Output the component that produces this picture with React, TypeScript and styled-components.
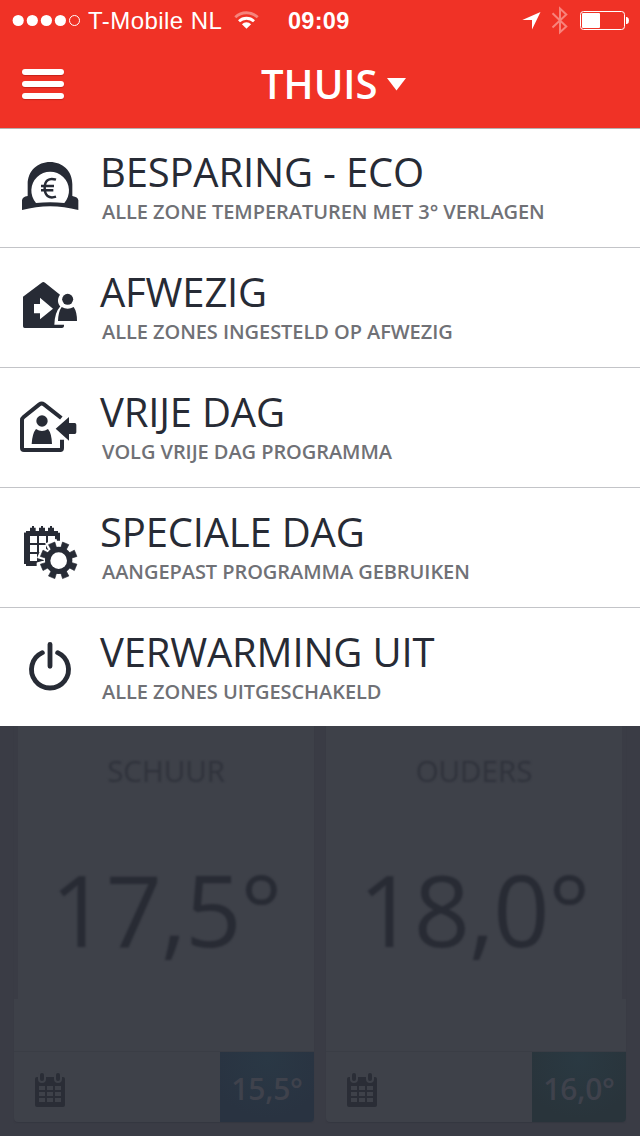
import React from "react";
import styled, { createGlobalStyle } from "styled-components";

const ink = "#272b35";
const gutter = "#3a3c45";
const surface = "#3e4149";

const GlobalStyle = createGlobalStyle`
  body { margin: 0; background: ${gutter}; font-family: "Open Sans", sans-serif; }
  svg { display: block; }
`;

const Screen = styled.div`
  width: 640px;
  height: 1136px;
  overflow: hidden;
  display: flex;
  flex-direction: column;
`;

const Header = styled.header`
  height: 128px;
  flex: none;
  background: #f03226;
  color: #fff;
  border-bottom: 1px solid #b5b1b0;
  display: flex;
  flex-direction: column;
`;

const StatusBar = styled.div`
  height: 40px;
  display: flex;
  align-items: center;
  font-family: "Liberation Sans", sans-serif;
  font-size: 24px;
`;

const Carrier = styled.span`
  width: 134px;
  margin: 2px 11px 0 7px;
  white-space: nowrap;
  letter-spacing: 0.45px;
`;

const Clock = styled.span`
  margin: 2px 0 0 28px;
  width: 62px;
  font-weight: 700;
  font-size: 23.5px;
  letter-spacing: 0.3px;
  white-space: nowrap;
`;

const StatusIcons = styled.div`
  margin-left: auto;
`;

const NavBar = styled.div`
  flex: 1;
  display: grid;
  grid-template-columns: 261px 1fr;
`;

const MenuButton = styled.button`
  border: 0;
  background: none;
  padding: 29px 0 0 22px;
  display: flex;
  flex-direction: column;
  align-items: flex-start;
  gap: 6px;
`;

const MenuBar = styled.span`
  width: 42px;
  height: 6px;
  border-radius: 3px;
  background: #fff;
  box-shadow: 0 1px 1px rgba(120, 0, 0, 0.35);
`;

const Title = styled.h1`
  margin: 0;
  display: flex;
  font-weight: 600;
  font-size: 40px;
  line-height: 54px;
  padding-top: 17px;
  gap: 8px;
`;

const List = styled.ul`
  list-style: none;
  margin: 0;
  padding: 0;
  flex: none;
  background: #fff;
`;

const Row = styled.li`
  height: 119px;
  display: flex;
  border-bottom: 1px solid #c3c4c8;
  &:first-child { height: 118px; }
  &:first-child > * { margin-top: -1px; }
  &:last-child { border-bottom: 0; height: 118px; }
`;

const RowText = styled.div`
  padding-top: 17px;
  white-space: nowrap;
`;

const RowTitle = styled.div`
  font-size: 40px;
  line-height: 54px;
  font-weight: 400;
  letter-spacing: -0.18px;
  color: ${ink};
`;

const RowNote = styled.div`
  font-size: 20px;
  line-height: 26px;
  font-weight: 600;
  letter-spacing: -0.06px;
  padding-left: 2px;
  color: #707176;
`;

const Zones = styled.main`
  flex: 1;
  display: flex;
  gap: 12px;
  padding: 0 14px 14px;
  background: ${gutter};
`;

const Card = styled.section`
  flex: 1;
  display: flex;
  flex-direction: column;
  background: ${surface};
  border-radius: 0 0 4px 4px;
  overflow: hidden;
  box-shadow: 0 1px 1px #353740;
`;

const CardBody = styled.div`
  height: 325px;
  flex: none;
  border-bottom: 1px solid #3a3d45;
`;

const CardFace = styled.div<{ $edge: "left" | "right" }>`
  height: 273px;
  text-align: center;
  border-${(p) => p.$edge}: 4px solid ${gutter};
`;

const ZoneName = styled.div`
  padding-top: 25px;
  font-size: 29.5px;
  line-height: 40px;
  color: #2f323b;
  filter: blur(1px);
`;

const Temperature = styled.div`
  margin-top: 50px;
  font-size: 98.5px;
  line-height: 136px;
  letter-spacing: -1.2px;
  color: #282b34;
  filter: blur(1.2px);
`;

const CardFooter = styled.div`
  flex: 1;
  display: flex;
  justify-content: space-between;
`;

const SetPoint = styled.div<{ $from: string; $to: string }>`
  width: 94px;
  height: 70px;
  background: radial-gradient(circle at 50% 10%, ${(p) => p.$from}, ${(p) => p.$to} 75%);
  color: #3f424c;
  font-size: 30px;
  font-weight: 600;
  line-height: 74px;
  letter-spacing: -0.2px;
  text-align: center;
`;

const SignalDots = () => (
  <svg width="81" height="40" fill="#fff">
    {[18.2, 32.3, 46.4, 60.4].map((x) => <circle key={x} cx={x} cy="20.5" r="5.6" />)}
    <circle cx="74.5" cy="20.5" r="5" fill="none" stroke="#fff" />
  </svg>
);

const Wifi = () => (
  <svg width="27" height="40" viewBox="233 0 27 40" fill="none" stroke="#fff" strokeWidth="2.8">
    <path d="M235.3 17.3a16 16 0 0 1 22.4 0" opacity=".4" />
    <path d="M239 21.3a10.8 10.8 0 0 1 15 0" />
    <path d="M246.5 28.8l-4.6-4.6a6.6 6.6 0 0 1 9.2 0z" fill="#fff" stroke="none" />
  </svg>
);

const RightStatus = () => (
  <svg width="120" height="40" viewBox="520 0 120 40" fill="none">
    <path d="M540.5 12L522.3 20H532V29.6Z" fill="#fff" />
    <path d="M552.5 13.3L566.3 26.5L560 32.3V8.5L566.3 14.5L552.5 27.5" stroke="#f8837b" strokeWidth="2" />
    <rect x="580.5" y="11.5" width="44" height="18" rx="3" stroke="#fff" />
    <rect x="582" y="13" width="18" height="15" rx="1" fill="#fff" />
    <path d="M626 17h1q2 .5 2 3.500t-2 3.500h-1z" fill="#fff" />
  </svg>
);

const RowIcon = ({ children }: { children: React.ReactNode }) => (
  <svg width="100" height="119" viewBox="0 -36 300 357" fill={ink}>{children}</svg>
);

const Savings = () => (
  <RowIcon>
    <path d="M66 210V181Q67 170 83 168V133C83 92 113 66 150 66S217 92 217 133V168Q234 171 235 181V210Q150 187 66 210Z" />
    <path d="M108 189A56.500 56.500 0 1 1 193 189Q150 184 108 189Z" fill="#fff" />
    <path d="M168 119C146 112 134 122 134 144S146 177 168 170M123 138H162M123 151H160" fill="none" stroke={ink} strokeWidth="7.500" />
  </RowIcon>
);

const Away = () => (
  <RowIcon>
    <path d="M69 110L125 68Q130 64 135 68L180 104C170 118 174 132 181 139Q164 158 163 194H192V199Q191 204 186 204H74Q69 204 69 199Z" />
    <path d="M102 132H120V113L159 146L120 178V160H102Z" fill="#fff" />
    <circle cx="203" cy="118" r="16.500" />
    <path d="M185 141Q203 152 221 141Q231 155 231 183H174Q175 155 185 141Z" />
  </RowIcon>
);

const DayOff = () => (
  <RowIcon>
    <path d="M184 114L132 73Q125 68 118 73L71 111Q66 115 66 120V204Q66 210 72 210H181Q186 210 186 204V179" fill="none" stroke={ink} strokeWidth="12" />
    <circle cx="126" cy="123" r="17" />
    <path d="M108 147Q126 159 144 147Q155 160 156 192H95Q97 160 108 147Z" />
    <path d="M167 146L207 111V129H224Q229 129 229 134V157Q229 162 224 162H207V182Z" />
  </RowIcon>
);

const toothPoints = Array.from({ length: 8 }, (_, i) => {
  const mid = 22.5 + i * 45;
  return [[-13, 38], [-10.5, 56], [10.5, 56], [13, 38]].map(([offset, r]) => {
    const a = ((mid + offset) * Math.PI) / 180;
    return `${(176 + r * Math.sin(a)).toFixed(1)},${(181 - r * Math.cos(a)).toFixed(1)}`;
  });
}).flat().join(" ");

const SpecialDay = () => (
  <RowIcon>
    <path d="M72 98H78V93H90V83H96V78H102V83H107V93H117V83H123V78H129V83H135V93H144V83H150V78H156V83H162V93H174V98H180V122H72Z" />
    <path d="M72 98H90V183H110V198H78V192H72Z" />
    <path d="M84 106H170V188H84Z" />
    <path d="M90 108H111V129H90ZM117 108H138V129H117ZM144 108H165V129H144ZM90 135H111V156H90ZM117 135H138V156H117ZM90 162H111V183H90Z" fill="#fff" />
    <polygon points={toothPoints} fill="#fff" stroke="#fff" strokeWidth="15" />
    <polygon points={toothPoints} stroke={ink} strokeWidth="2" strokeLinejoin="round" />
    <circle cx="176" cy="181" r="41" />
    <circle cx="176" cy="182" r="25" fill="#fff" />
  </RowIcon>
);

const Power = () => (
  <RowIcon>
    <path d="M127 98A55.500 55.500 0 1 0 173 98M150 73V139" fill="none" stroke={ink} strokeWidth="14.500" strokeLinecap="round" />
  </RowIcon>
);

const CalendarIcon = () => (
  <svg width="60" height="70" viewBox="42 186 180 210" fill="#2a2d36">
    <path d="M111 261H189Q195 261 195 267V345Q195 351 189 351H111Q105 351 105 345V267Q105 261 111 261Z" />
    <path d="M126 255V267M174 255V267" stroke={surface} strokeWidth="24" strokeLinecap="round" />
    <path d="M126 255V267M174 255V267" stroke="#2a2d36" strokeWidth="12" strokeLinecap="round" />
    {[288, 306, 324].map((y) => [117, 141, 165].map((x) => (
      <rect key={`${x}-${y}`} x={x} y={y} width="18" height="12" fill={surface} />
    )))}
  </svg>
);

const modes = [
  { title: "BESPARING - ECO", note: "ALLE ZONE TEMPERATUREN MET 3° VERLAGEN", Icon: Savings },
  { title: "AFWEZIG", note: "ALLE ZONES INGESTELD OP AFWEZIG", Icon: Away },
  { title: "VRIJE DAG", note: "VOLG VRIJE DAG PROGRAMMA", Icon: DayOff },
  { title: "SPECIALE DAG", note: "AANGEPAST PROGRAMMA GEBRUIKEN", Icon: SpecialDay },
  { title: "VERWARMING UIT", note: "ALLE ZONES UITGESCHAKELD", Icon: Power },
];

const zones = [
  { name: "SCHUUR", temp: "17,5°", target: "15,5°", from: "#2a3845", to: "#293341", edge: "left" },
  { name: "OUDERS", temp: "18,0°", target: "16,0°", from: "#2a3942", to: "#29343b", edge: "right" },
] as const;

export default function App() {
  return (
    <Screen>
      <GlobalStyle />
      <Header>
        <StatusBar>
          <SignalDots />
          <Carrier>T-Mobile NL</Carrier>
          <Wifi />
          <Clock>09:09</Clock>
          <StatusIcons><RightStatus /></StatusIcons>
        </StatusBar>
        <NavBar>
          <MenuButton aria-label="Menu"><MenuBar /><MenuBar /><MenuBar /></MenuButton>
          <Title>
            THUIS
            <svg width="22" height="40" viewBox="0 0 22 40"><path d="M1 21H20L10.500 33.500Z" fill="#fff" /></svg>
          </Title>
        </NavBar>
      </Header>
      <List>
        {modes.map(({ title, note, Icon }) => (
          <Row key={title}>
            <Icon />
            <RowText>
              <RowTitle>{title}</RowTitle>
              <RowNote>{note}</RowNote>
            </RowText>
          </Row>
        ))}
      </List>
      <Zones>
        {zones.map((z) => (
          <Card key={z.name}>
            <CardBody>
              <CardFace $edge={z.edge}>
                <ZoneName>{z.name}</ZoneName>
                <Temperature>{z.temp}</Temperature>
              </CardFace>
            </CardBody>
            <CardFooter>
              <CalendarIcon />
              <SetPoint $from={z.from} $to={z.to}>{z.target}</SetPoint>
            </CardFooter>
          </Card>
        ))}
      </Zones>
    </Screen>
  );
}
